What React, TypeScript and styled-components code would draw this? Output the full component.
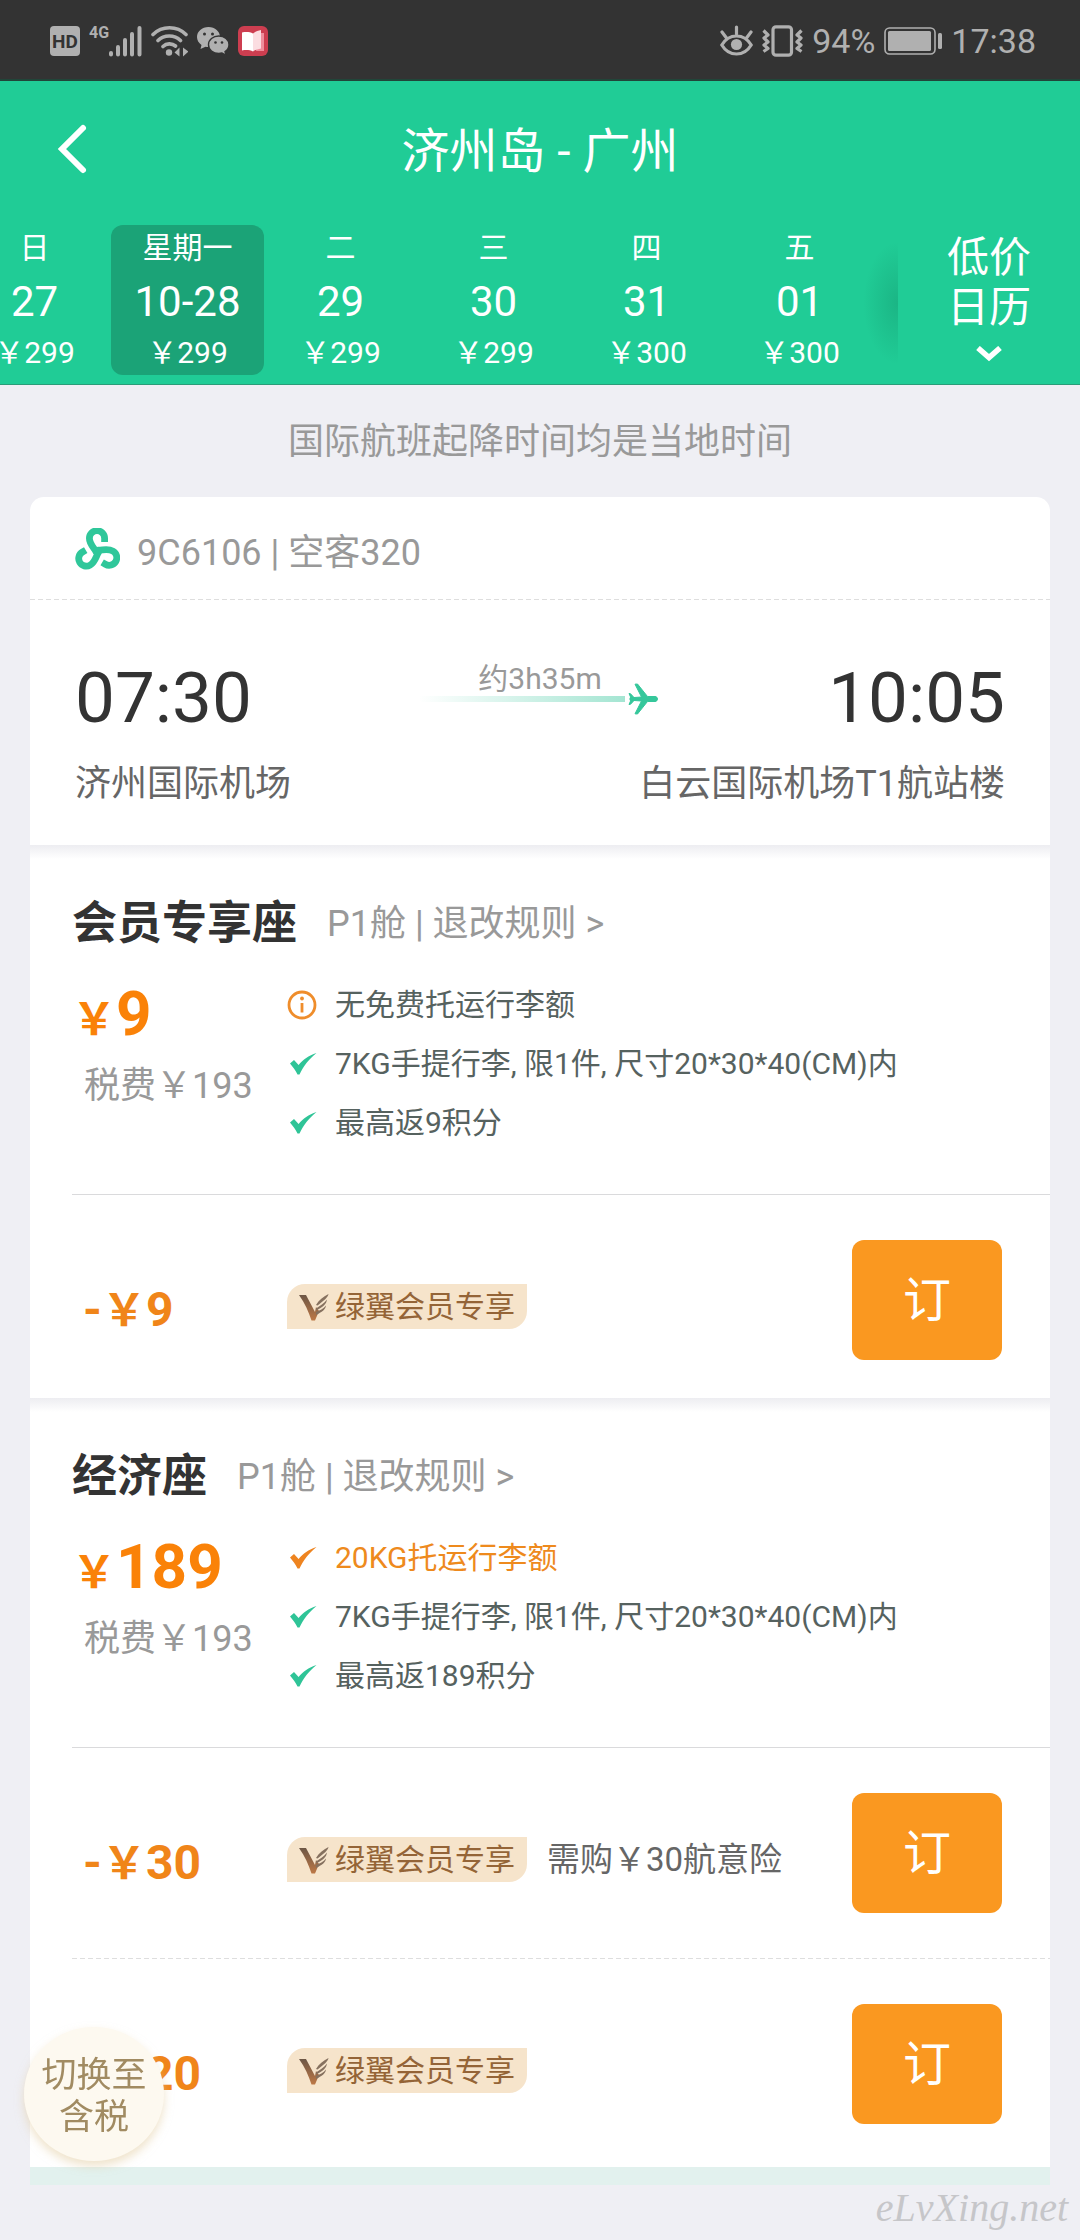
import React from "react";
import styled, { createGlobalStyle, css } from "styled-components";

const colors = {
  green: "#20cc96",
  greenDark: "#1ba377",
  page: "#efeff4",
  ink: "#333333",
  body: "#666666",
  muted: "#999999",
  detail: "#56625f",
  orange: "#fa8208",
  button: "#fa9820",
  tag: "#f6e4cb",
  tagInk: "#946437",
  status: "#b0b0b0",
};

const GlobalStyle = createGlobalStyle`
  *, *::before, *::after { box-sizing: border-box; }
  body {
    margin: 0;
    background: ${colors.page};
    font-family: Roboto, "Noto Sans CJK SC", sans-serif;
    color: ${colors.ink};
  }
  button {
    margin: 0;
    padding: 0;
    border: 0;
    background: none;
    font: inherit;
    color: inherit;
    cursor: pointer;
  }
  h1, h2, p, ul { margin: 0; padding: 0; }
  ul { list-style: none; }
  a { color: inherit; text-decoration: none; }
  svg { display: block; flex: none; }
`;

const Page = styled.div`
  position: relative;
  min-height: 100vh;
  display: flex;
  flex-direction: column;
  overflow-x: hidden;
`;

/* ---------- status bar ---------- */

const StatusBar = styled.div`
  display: flex;
  justify-content: space-between;
  align-items: center;
  height: 81px;
  padding: 2px 44px 0 50px;
  background: #333333;
  border-bottom: 2px solid #214539;
  color: ${colors.status};
`;

const StatusGroup = styled.div`
  display: flex;
  align-items: center;
  gap: 9px;
`;

const StatusText = styled.span`
  font-size: 34px;
  line-height: 40px;
`;

const HdBadge = styled.span`
  width: 30px;
  height: 30px;
  border-radius: 4px;
  background: ${colors.status};
  color: #333333;
  font-size: 19px;
  font-weight: 700;
  line-height: 31px;
  text-align: center;
`;

const Signal = styled.span`
  display: flex;
  align-items: flex-start;
  height: 32px;
  font-size: 16px;
  font-weight: 700;
  line-height: 16px;
`;

/* ---------- header ---------- */

const Header = styled.header`
  background: ${colors.green};
  border-bottom: 1px solid #2a9c78;
  color: #ffffff;
`;

const TitleBar = styled.div`
  display: grid;
  grid-template-columns: 144px 1fr 144px;
  align-items: center;
  height: 138px;
`;

const BackButton = styled.button`
  display: flex;
  align-items: center;
  height: 100%;
  padding: 0 0 2px 56px;
`;

const Title = styled.h1`
  padding-top: 3px;
  font-size: 48px;
  font-weight: 400;
  line-height: 60px;
  text-align: center;
`;

const DateBar = styled.div`
  display: flex;
  padding: 6px 0 9px;
`;

const DateStrip = styled.div`
  position: relative;
  flex: 1;
  min-width: 0;
  overflow: hidden;

  &::after {
    content: "";
    position: absolute;
    top: 18px;
    right: 0;
    width: 34px;
    height: 120px;
    background: radial-gradient(ellipse at right center, rgba(22, 158, 115, 0.5), rgba(32, 204, 150, 0) 72%);
  }
`;

const DateList = styled.div`
  display: flex;
  margin-left: -42px;
`;

const DateItem = styled.button<{ $active?: boolean }>`
  display: flex;
  flex: none;
  flex-direction: column;
  align-items: center;
  width: 153px;
  height: 150px;
  border-radius: 12px;
  background: ${(p) => (p.$active ? colors.greenDark : "transparent")};
`;

const WeekDay = styled.span`
  font-size: 30px;
  line-height: 46px;
`;

const DayNumber = styled.span`
  font-size: 42px;
  line-height: 62px;
`;

const DayPrice = styled.span`
  font-size: 30px;
  line-height: 40px;
`;

const CalendarButton = styled.button`
  display: flex;
  flex: none;
  flex-direction: column;
  align-items: center;
  gap: 13px;
  width: 182px;
  padding-top: 8px;
  font-size: 42px;
  line-height: 50px;
`;

/* ---------- flight card ---------- */

const Notice = styled.p`
  padding-top: 2px;
  color: ${colors.muted};
  font-size: 36px;
  line-height: 110px;
  text-align: center;
`;

const Card = styled.main`
  margin: 0 30px;
  border-radius: 14px 14px 0 0;
  background: #ffffff;
`;

const Dashes = css`
  background: repeating-linear-gradient(90deg, #dedede 0 5px, transparent 5px 8px);
`;

const DashedRule = styled.div<{ $inset?: boolean }>`
  height: 1px;
  margin-left: ${(p) => (p.$inset ? "42px" : "0")};
  ${Dashes}
`;

const Rule = styled.div`
  height: 1px;
  margin-left: 42px;
  background: #dadadc;
`;

const FlightHead = styled.div`
  display: flex;
  align-items: center;
  gap: 17px;
  height: 102px;
  padding: 2px 45px 0;
  color: ${colors.muted};
  font-size: 36px;
`;

const Flight = styled.section`
  padding: 56px 45px 37px;
`;

const SplitRow = styled.div`
  display: flex;
  justify-content: space-between;
`;

const Airports = styled(SplitRow)`
  margin-top: 20px;
  color: ${colors.body};
  font-size: 36px;
  line-height: 48px;
`;

const Time = styled.span`
  font-size: 71px;
  line-height: 84px;
`;

const Duration = styled.div`
  width: 242px;
  padding-top: 6px;
  color: ${colors.muted};
  font-size: 30px;
  line-height: 34px;
  text-align: center;
`;

const Track = styled.div`
  display: flex;
  align-items: center;
  gap: 3px;
  height: 6px;
  padding-right: 3px;
`;

const TrackLine = styled.div`
  flex: 1;
  height: 6px;
  background: linear-gradient(90deg, rgba(160, 227, 206, 0), #a4e5d2);
`;

/* ---------- fares ---------- */

const Fare = styled.section`
  padding-top: 49px;
  background: linear-gradient(#ededf1, #ffffff 14px);

  &:last-of-type { padding-bottom: 5px; }
`;

const FareHead = styled.div`
  display: flex;
  align-items: center;
  gap: 30px;
  padding: 0 42px;
`;

const FareName = styled.h2`
  font-size: 45px;
  font-weight: 700;
  line-height: 60px;
`;

const RuleLink = styled.a`
  color: ${colors.muted};
  font-size: 36px;
  line-height: 60px;
`;

const FareBody = styled.div`
  display: grid;
  grid-template-columns: 215px 1fr;
  padding: 21px 42px 42px;
`;

const Price = styled.p`
  color: ${colors.orange};
  font-size: 62px;
  font-weight: 700;
  line-height: 78px;
`;

const Sign = styled.span`
  font-size: 44px;
`;

const Tax = styled.p`
  padding-left: 12px;
  color: ${colors.muted};
  font-size: 36px;
  line-height: 54px;
`;

const Perk = styled.li<{ $highlight?: boolean }>`
  display: flex;
  align-items: center;
  gap: 18px;
  color: ${(p) => (p.$highlight ? "#ee8a1d" : colors.detail)};
  font-size: 30px;
  line-height: 59px;
`;

const Offer = styled.div`
  display: grid;
  grid-template-columns: 215px 1fr auto;
  align-items: center;
  padding: 45px 48px 38px 42px;

  &:not(:last-child) { padding-bottom: 45px; }
`;

const OfferPrice = styled.span`
  padding: 20px 0 0 11px;
  color: #f08519;
  font-size: 48px;
  font-weight: 700;
  line-height: 48px;
`;

const OfferInfo = styled.div`
  display: flex;
  align-items: center;
  gap: 20px;
  padding-top: 13px;
`;

const MemberTag = styled.span`
  display: flex;
  align-items: center;
  gap: 6px;
  height: 45px;
  padding: 0 12px;
  border-radius: 18px 0 18px 0;
  background: ${colors.tag};
  color: ${colors.tagInk};
  font-size: 30px;
  line-height: 45px;
  white-space: nowrap;
`;

const OfferNote = styled.span`
  color: ${colors.body};
  font-size: 33px;
  line-height: 45px;
  white-space: nowrap;
`;

const BookButton = styled.button`
  width: 150px;
  height: 120px;
  padding-top: 2px;
  border-radius: 12px;
  background: ${colors.button};
  color: #ffffff;
  font-size: 48px;
  line-height: 118px;
`;

const CardFoot = styled.div`
  height: 18px;
  margin: 0 30px;
  background: #e2f1ee;
`;

const Footer = styled.footer`
  padding: 0 12px 9px;
  color: #c6c6c9;
  font-family: "Liberation Serif", serif;
  font-size: 40px;
  font-style: italic;
  line-height: 46px;
  text-align: right;
`;

const TaxToggle = styled.button`
  position: fixed;
  left: 24px;
  bottom: 79px;
  width: 140px;
  height: 134px;
  padding-top: 6px;
  border-radius: 50%;
  background: #fdf9f0;
  box-shadow: 0 5px 10px rgba(226, 204, 160, 0.55);
  color: #a18b62;
  font-size: 35px;
  line-height: 42px;
  white-space: nowrap;
`;

const ToggleLine = styled.span`
  display: flex;
  justify-content: center;
`;

/* ---------- icons ---------- */

const SignalIcon = () => (
  <svg width="33" height="32" viewBox="0 0 33 32" fill="none" stroke="#b0b0b0" strokeWidth="4" strokeLinecap="round">
    <path d="M2 28v1.500M9 22v7.500M16 15v14.500M23 9v20.500M30.500 3v26.500" />
  </svg>
);

const WifiIcon = () => (
  <svg width="37" height="32" viewBox="0 0 37 32" fill="none" stroke="#b0b0b0" strokeWidth="3.600" strokeLinecap="round">
    <path d="M2 9.500C11 .5 26 .5 35 9.500M7 15.500c6-6 16.500-6 22.500 0M12 21.500c3.500-3.400 9-3.400 12.500-.5" />
    <circle cx="18" cy="27.500" r="3.200" fill="#b0b0b0" stroke="none" />
    <path d="M28.500 22.500v9l-5-4zM32 22.500l5.500 4-5.500 5z" fill="#b0b0b0" stroke="none" />
  </svg>
);

const WechatIcon = () => (
  <svg width="32" height="30" viewBox="0 0 32 30">
    <path d="M11.500 1C5 1 0 5.500 0 11c0 3.300 1.700 6 4.500 8L3.500 23l5-2.300c1 .2 2 .3 3 .3 6.500 0 11.500-4.500 11.500-10S18 1 11.500 1z" fill="#b0b0b0" />
    <path d="M21.800 10c-5.800 0-10.300 3.900-10.300 8.800s4.500 8.700 10.300 8.700c1.100 0 2.200-.2 3.200-.5l4 2.300-1-3.700c2.500-1.600 4-4.100 4-6.800 0-4.900-4.500-8.800-10.200-8.800z" fill="#b0b0b0" stroke="#333" strokeWidth="1.400" />
    <g fill="#333">
      <circle cx="7.500" cy="8" r="1.500" /><circle cx="15.500" cy="8" r="1.500" />
      <circle cx="18.500" cy="16.500" r="1.300" /><circle cx="25" cy="16.500" r="1.300" />
    </g>
  </svg>
);

const BookAppIcon = () => (
  <svg width="30" height="30" viewBox="0 0 30 30">
    <rect width="30" height="30" rx="6" fill="#cd3e50" />
    <path d="M22 7h4v18h-8z" fill="#ef8d9b" />
    <path d="M4 6.500c4-.8 8-.5 11 1v18c-3-1.500-7-1.800-11-1z" fill="#fff" />
    <path d="M15 7.500c2-2 5-3 8-3.500v18.500c-3 .5-6 1.500-8 3z" fill="#fbdde1" />
  </svg>
);

const EyeIcon = () => (
  <svg width="33" height="32" viewBox="0 0 33 32" fill="none" stroke="#b0b0b0" strokeWidth="3.200" strokeLinecap="round">
    <path d="M1.800 20C9 8 24 8 31.200 20 24 32 9 32 1.800 20z" />
    <circle cx="16.500" cy="19.500" r="5.600" fill="#b0b0b0" stroke="none" />
    <path d="M16.500 2v7M2 7l4.500 6M31 7l-4.500 6" />
  </svg>
);

const VibrateIcon = () => (
  <svg width="41" height="32" viewBox="0 0 41 32" fill="none" stroke="#b0b0b0" strokeWidth="3.200" strokeLinejoin="round">
    <rect x="11" y="1.800" width="18.500" height="28.400" rx="3" />
    <path d="M1.500 5.500l4.500 4.500-4 3 4 4-4 3 4 3.500-4.500 3M39.500 5.500L35 10l4 3-4 4 4 3-4 3.500 4.500 3" />
  </svg>
);

const BatteryIcon = () => (
  <svg width="58" height="28" viewBox="0 0 58 28">
    <rect x="1" y="1" width="50" height="26" rx="4.500" fill="none" stroke="#b0b0b0" strokeWidth="1.600" />
    <rect x="4" y="4" width="43" height="20" rx="1.500" fill="#b0b0b0" />
    <rect x="54" y="6" width="4" height="16" rx="1.500" fill="#b0b0b0" />
  </svg>
);

const BackIcon = () => (
  <svg width="32" height="52" viewBox="0 0 32 52" fill="none" stroke="#fff" strokeWidth="6" strokeLinecap="round">
    <path d="M27 5L6 26l21 21" />
  </svg>
);

const ChevronIcon = () => (
  <svg width="26" height="16" viewBox="0 0 26 16" fill="none" stroke="#fff" strokeWidth="5.500">
    <path d="M2 2l11 9.500L24 2" />
  </svg>
);

const arm = "M20 24.500C18 20 12.900 16.500 12.900 10.300A7.600 7.600 0 0 1 28.100 10.300V14";

const AirlineLogo = () => (
  <svg width="45" height="42" viewBox="-1.500 0 45 42" fill="none" stroke="#2fc79a" strokeWidth="6.800">
    <path d={arm} />
    <path d={arm} transform="rotate(120 21 23.500)" />
    <path d={arm} transform="rotate(240 21 23.500)" />
    <circle cx="21" cy="23.500" r="4.500" fill="#2fc79a" stroke="none" />
  </svg>
);

const PlaneShape = styled.svg`
  margin: -13px 0;
`;

const PlaneIcon = () => (
  <PlaneShape width="30" height="32" viewBox="0 0 30 32" fill="#35c79b" stroke="#35c79b" strokeWidth="1" strokeLinejoin="round">
    <path d="M2 14.800l11.500-.8L7 1.200 9.500 1 19.500 13.500H27c1.600 0 2.500 1.300 2.500 2.500s-.9 2.500-2.500 2.500h-7.500L9.500 31 7 30.800 13.500 18 2 17.200z" />
    <path d="M1 10.500l1.500.2L6 14.500 3 15zM1 21.500l1.500-.2L6 17.500 3 17z" />
  </PlaneShape>
);

const InfoIcon = () => (
  <svg width="30" height="30" viewBox="0 0 30 30" fill="none" stroke="#ef8d2b" strokeWidth="2.800">
    <circle cx="15" cy="15" r="13" />
    <path d="M15 13v9.500" />
    <circle cx="15" cy="8.500" r="1.900" fill="#ef8d2b" stroke="none" />
  </svg>
);

const CheckIcon = ({ color }: { color: string }) => (
  <svg width="30" height="30" viewBox="0 0 30 30" fill={color}>
    <path d="M3 14.500l4-3.500 4.600 5C16 10.500 21.500 6.500 29.500 4 21.500 10.500 16.500 17 12.500 25.500h-2C8.500 21.500 6 18 3 14.500z" />
  </svg>
);

const WingIcon = () => (
  <svg width="30" height="28" viewBox="0 0 30 28">
    <defs>
      <linearGradient id="wing" x1="0" y1="0" x2="0" y2="1">
        <stop offset="0" stopColor="#6d5746" />
        <stop offset="1" stopColor="#bd7846" />
      </linearGradient>
    </defs>
    <path d="M0 2h7l9 17 1-5 3 4-4 9.500h-3.500C9.500 19 6 10 0 2z" fill="url(#wing)" />
    <path d="M17 12C20 7 24 4 29.500 1c-.5 3.500-4.500 6.500-11 11.500zM17 15.500c4-3 8-5 11-9-.5 4.500-4 7.500-11 11zM17 19c3.500-1.500 7.500-3 10-6.500-.5 4-4 6.500-10 9.500z" fill="#86715f" />
  </svg>
);

/* ---------- data ---------- */

const days = [
  { week: "日", day: "27", price: "￥299" },
  { week: "星期一", day: "10-28", price: "￥299", active: true },
  { week: "二", day: "29", price: "￥299" },
  { week: "三", day: "30", price: "￥299" },
  { week: "四", day: "31", price: "￥300" },
  { week: "五", day: "01", price: "￥300" },
];

type PerkKind = "info" | "check" | "bonus";

interface FareData {
  name: string;
  price: string;
  perks: { kind: PerkKind; text: string }[];
  offers: { off: string; note?: string }[];
}

const fares: FareData[] = [
  {
    name: "会员专享座",
    price: "9",
    perks: [
      { kind: "info", text: "无免费托运行李额" },
      { kind: "check", text: "7KG手提行李, 限1件, 尺寸20*30*40(CM)内" },
      { kind: "check", text: "最高返9积分" },
    ],
    offers: [{ off: "9" }],
  },
  {
    name: "经济座",
    price: "189",
    perks: [
      { kind: "bonus", text: "20KG托运行李额" },
      { kind: "check", text: "7KG手提行李, 限1件, 尺寸20*30*40(CM)内" },
      { kind: "check", text: "最高返189积分" },
    ],
    offers: [{ off: "30", note: "需购￥30航意险" }, { off: "20" }],
  },
];

const perkIcon = (kind: PerkKind) =>
  kind === "info" ? <InfoIcon /> : <CheckIcon color={kind === "bonus" ? "#ee8420" : "#2fc497"} />;

const FareBlock = ({ fare }: { fare: FareData }) => (
  <Fare>
    <FareHead>
      <FareName>{fare.name}</FareName>
      <RuleLink href="#rules">P1舱 | 退改规则 &gt;</RuleLink>
    </FareHead>
    <FareBody>
      <div>
        <Price>
          <Sign>￥</Sign>
          {fare.price}
        </Price>
        <Tax>税费￥193</Tax>
      </div>
      <ul>
        {fare.perks.map((perk) => (
          <Perk key={perk.text} $highlight={perk.kind === "bonus"}>
            {perkIcon(perk.kind)}
            {perk.text}
          </Perk>
        ))}
      </ul>
    </FareBody>
    <Rule />
    {fare.offers.map((offer, i) => (
      <React.Fragment key={offer.off}>
        {i > 0 && <DashedRule $inset />}
        <Offer>
          <OfferPrice>
            -<Sign>￥</Sign>
            {offer.off}
          </OfferPrice>
          <OfferInfo>
            <MemberTag>
              <WingIcon />
              绿翼会员专享
            </MemberTag>
            {offer.note && <OfferNote>{offer.note}</OfferNote>}
          </OfferInfo>
          <BookButton>订</BookButton>
        </Offer>
      </React.Fragment>
    ))}
  </Fare>
);

export default function App() {
  return (
    <Page lang="zh-CN">
      <GlobalStyle />
      <StatusBar>
        <StatusGroup>
          <HdBadge>HD</HdBadge>
          <Signal>
            4G
            <SignalIcon />
          </Signal>
          <WifiIcon />
          <WechatIcon />
          <BookAppIcon />
        </StatusGroup>
        <StatusGroup>
          <EyeIcon />
          <VibrateIcon />
          <StatusText>94%</StatusText>
          <BatteryIcon />
          <StatusText>17:38</StatusText>
        </StatusGroup>
      </StatusBar>

      <Header>
        <TitleBar>
          <BackButton aria-label="返回">
            <BackIcon />
          </BackButton>
          <Title>济州岛 - 广州</Title>
        </TitleBar>
        <DateBar>
          <DateStrip>
            <DateList>
              {days.map((d) => (
                <DateItem key={d.day} $active={d.active}>
                  <WeekDay>{d.week}</WeekDay>
                  <DayNumber>{d.day}</DayNumber>
                  <DayPrice>{d.price}</DayPrice>
                </DateItem>
              ))}
            </DateList>
          </DateStrip>
          <CalendarButton>
            <span>
              低价
              <br />
              日历
            </span>
            <ChevronIcon />
          </CalendarButton>
        </DateBar>
      </Header>

      <Notice>国际航班起降时间均是当地时间</Notice>

      <Card>
        <FlightHead>
          <AirlineLogo />
          <span>9C6106 | 空客320</span>
        </FlightHead>
        <DashedRule />
        <Flight>
          <SplitRow>
            <Time>07:30</Time>
            <Duration>
              约3h35m
              <Track>
                <TrackLine />
                <PlaneIcon />
              </Track>
            </Duration>
            <Time>10:05</Time>
          </SplitRow>
          <Airports>
            <span>济州国际机场</span>
            <span>白云国际机场T1航站楼</span>
          </Airports>
        </Flight>
        {fares.map((fare) => (
          <FareBlock key={fare.name} fare={fare} />
        ))}
      </Card>
      <CardFoot />
      <Footer>eLvXing.net</Footer>

      <TaxToggle>
        <ToggleLine>切换至</ToggleLine>
        <ToggleLine>含税</ToggleLine>
      </TaxToggle>
    </Page>
  );
}
